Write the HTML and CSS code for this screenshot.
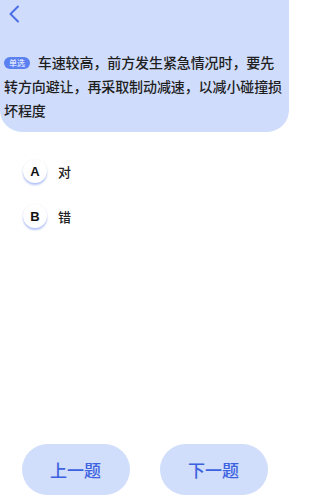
FILE: index.html
```html
<!DOCTYPE html>
<html lang="zh">
<head>
<meta charset="utf-8">
<link rel="stylesheet" href="styles.css">
</head>
<body>
<div class="page">
  <header class="head">
    <div class="back">
      <svg width="12" height="18" viewBox="0 0 12 18"><path d="M10 1.5 L2.5 9 L10 16.5" fill="none" stroke="#4a6fe6" stroke-width="2" stroke-linecap="round" stroke-linejoin="round"/></svg>
    </div>
    <p class="question"><span class="badge">单选</span>车速较高，前方发生紧急情况时，要先转方向避让，再采取制动减速，以减小碰撞损坏程度</p>
  </header>
  <ul class="options">
    <li class="option"><span class="letter">A</span><span class="otext">对</span></li>
    <li class="option"><span class="letter">B</span><span class="otext">错</span></li>
  </ul>
  <div class="spacer"></div>
  <nav class="actions">
    <button class="btn">上一题</button>
    <button class="btn">下一题</button>
  </nav>
</div>
</body>
</html>
```

FILE: styles.css
```css
* { box-sizing: border-box; }
html, body { margin: 0; padding: 0; background: #fff; }
body { font-family: "Noto Sans CJK SC", "Noto Sans", sans-serif; }
.page { width: 289px; height: 500px; display: flex; flex-direction: column; }
.head {
  background: #cfdcfb;
  height: 132px;
  border-radius: 0 0 22px 22px;
  padding: 4px 4px 0 4px;
}
.back { padding-left: 4px; height: 20px; display: flex; align-items: center; }
.back svg { display: block; }
.question {
  margin: 26px 0 0 0;
  font-size: 14px;
  line-height: 24px;
  font-weight: 500;
  color: #1f1f1f;
  letter-spacing: -0.1px;
}
.badge {
  display: inline-block;
  background: #5b80f2;
  color: #fff;
  font-size: 8px;
  line-height: 12px;
  height: 12px;
  padding: 0 5px;
  border-radius: 6px;
  vertical-align: 2px;
  margin-right: 8px;
  font-weight: 400;
}
.options { list-style: none; margin: 27px 0 0 0; padding: 0 0 0 23px; display: flex; flex-direction: column; gap: 21px; }
.option { display: flex; align-items: center; height: 24px; }
.letter {
  width: 24px; height: 24px; border-radius: 50%;
  background: #fff;
  box-shadow: 0 2px 2px rgba(90, 125, 240, 0.45), 0 0 1px rgba(0,0,0,0.08);
  display: flex; align-items: center; justify-content: center;
  font-family: "Liberation Sans", Arial, sans-serif;
  font-weight: 700; font-size: 13px; color: #111;
}
.otext { margin-left: 11px; font-size: 13px; color: #222; font-weight: 500; }
.spacer { flex: 1; }
.actions { display: flex; justify-content: center; gap: 30px; padding-bottom: 5px; }
.btn {
  width: 108px; height: 51px; border: 0; border-radius: 26px;
  background: #d0ddfb; color: #3c62e0;
  font-family: "Noto Sans CJK SC", sans-serif; font-size: 17px; font-weight: 500;
  padding: 0;
}
```
